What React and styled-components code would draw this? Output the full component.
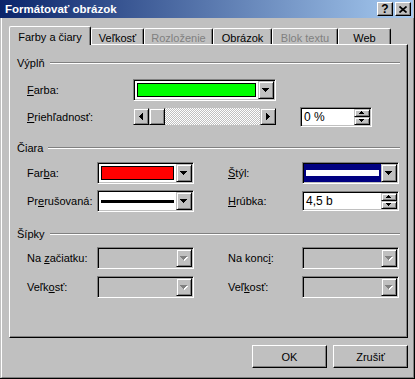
import React from "react";
import styled, { createGlobalStyle } from "styled-components";

const FACE = "#c0c0c0";
const SHADOW = "#808080";
const DARK = "#000";
const LIGHT = "#fff";

const GlobalStyle = createGlobalStyle`
  html, body { margin: 0; padding: 0; background: ${FACE}; }
  body {
    font-family: "Liberation Sans", Arial, sans-serif;
    font-size: 11px;
    color: #000;
  }
  * { box-sizing: border-box; }
`;

const Window = styled.div`
  width: 415px;
  height: 379px;
  background: ${FACE};
  display: flex;
  flex-direction: column;
  border-right: 1px solid ${DARK};
  border-bottom: 1px solid ${DARK};
  overflow: hidden;
`;

const TitleBar = styled.div`
  flex: none;
  height: 18px;
  margin-right: 1px;
  display: flex;
  align-items: center;
  padding: 0 2px 0 5px;
  background: linear-gradient(to right, #0a246a, #a6caf0);
`;

const TitleText = styled.div`
  flex: 1;
  color: #fff;
  font-weight: bold;
  font-size: 11.5px;
  white-space: nowrap;
`;

const CaptionButton = styled.div`
  width: 16px;
  height: 14px;
  margin-left: ${({ $gap }) => $gap || 0}px;
  background: ${FACE};
  border: 1px solid;
  border-color: ${LIGHT} ${DARK} ${DARK} ${LIGHT};
  box-shadow: inset -1px -1px ${SHADOW};
  display: flex;
  align-items: center;
  justify-content: center;
  font-weight: bold;
  font-size: 12px;
  line-height: 1;
`;

const Body = styled.div`
  flex: 1;
  display: flex;
  flex-direction: column;
  margin-left: 1px;
  border-left: 1px solid ${LIGHT};
  border-right: 1px solid ${SHADOW};
  border-bottom: 1px solid ${SHADOW};
  padding: 8px 5px 0 7px;
`;

const TabStrip = styled.div`
  height: 18px;
  display: flex;
  align-items: flex-end;
`;

const Tab = styled.div`
  width: ${({ $w }) => $w}px;
  height: ${({ $active }) => ($active ? 19 : 16)}px;
  margin-bottom: ${({ $active }) => ($active ? -1 : 0)}px;
  position: relative;
  z-index: ${({ $active }) => ($active ? 1 : 0)};
  background: ${FACE};
  border-top: 1px solid ${LIGHT};
  border-left: 1px solid ${LIGHT};
  border-right: 1px solid ${DARK};
  border-radius: 2px 2px 0 0;
  box-shadow: inset -1px 0 ${SHADOW};
  display: flex;
  align-items: center;
  justify-content: center;
  padding-top: ${({ $active }) => ($active ? 1 : 2)}px;
  white-space: nowrap;
  color: ${({ $disabled }) => ($disabled ? SHADOW : "#000")};
`;

const Panel = styled.div`
  height: 294px;
  border-top: 1px solid ${LIGHT};
  border-left: 1px solid ${LIGHT};
  border-right: 1px solid ${DARK};
  border-bottom: 1px solid ${DARK};
  box-shadow: inset -1px -1px ${SHADOW};
  padding: 11px 7px 0 7px;
  display: flex;
  flex-direction: column;
`;

const GroupHeader = styled.div`
  height: 13px;
  display: flex;
  align-items: center;
  margin-top: ${({ $mt }) => $mt || 0}px;
`;

const GroupLine = styled.div`
  flex: 1;
  height: 2px;
  margin-left: 5px;
  border-top: 1px solid ${SHADOW};
  border-bottom: 1px solid ${LIGHT};
`;

const FillRow = styled.div`
  display: grid;
  grid-template-columns: 106px 143px 24px 72px;
  align-items: ${({ $align }) => $align || "center"};
  margin: ${({ $mt }) => $mt}px 0 0 10px;
`;

const LineRow = styled.div`
  display: grid;
  grid-template-columns: 70px 97px 34px 74px 97px;
  align-items: center;
  margin: ${({ $mt }) => $mt}px 0 0 10px;
`;

const Label = styled.div`
  white-space: nowrap;
  grid-column: ${({ $col }) => $col || "auto"};
  align-self: center;
`;

const Combo = styled.div`
  height: 22px;
  grid-column: ${({ $col }) => $col || "auto"};
  display: flex;
  padding: 1px;
  border: 1px solid;
  border-color: ${SHADOW} ${LIGHT} ${LIGHT} ${SHADOW};
  box-shadow: inset 1px 1px ${DARK}, inset -1px -1px ${FACE};
  background: ${({ $disabled }) => ($disabled ? FACE : LIGHT)};
`;

const ComboField = styled.div`
  flex: 1;
  padding: 2px;
  display: flex;
  align-items: center;
  background: ${({ $bg }) => $bg || "transparent"};
`;

const Swatch = styled.div`
  width: 100%;
  height: 100%;
  border: 1px solid ${DARK};
  background: ${({ $color }) => $color};
`;

const LineSample = styled.div`
  width: 100%;
  height: ${({ $weight }) => $weight}px;
  background: ${({ $color }) => $color};
`;

const DropButton = styled.div`
  width: 16px;
  flex: none;
  background: ${FACE};
  border: 1px solid;
  border-color: ${FACE} ${DARK} ${DARK} ${FACE};
  box-shadow: inset 1px 1px ${LIGHT}, inset -1px -1px ${SHADOW};
  display: flex;
  align-items: center;
  justify-content: center;
`;

const Slider = styled.div`
  height: 17px;
  margin-top: 1px;
  display: flex;
`;

const RaisedBox = styled.div`
  width: 16px;
  flex: none;
  background: ${FACE};
  border: 1px solid;
  border-color: ${FACE} ${DARK} ${DARK} ${FACE};
  box-shadow: inset 1px 1px ${LIGHT}, inset -1px -1px ${SHADOW};
  display: flex;
  align-items: center;
  justify-content: center;
`;

const Track = styled.div`
  flex: 1;
  background-color: ${FACE};
  background-image: conic-gradient(${LIGHT} 25%, ${FACE} 0 50%, ${LIGHT} 0 75%, ${FACE} 0);
  background-size: 2px 2px;
`;

const Spin = styled.div`
  height: 20px;
  grid-column: ${({ $col }) => $col || "auto"};
  display: flex;
  padding: 1px;
  border: 1px solid;
  border-color: ${SHADOW} ${LIGHT} ${LIGHT} ${SHADOW};
  box-shadow: inset 1px 1px ${DARK}, inset -1px -1px ${FACE};
  background: ${LIGHT};
`;

const SpinText = styled.div`
  flex: 1;
  padding-left: 2px;
  display: flex;
  align-items: center;
  font-size: 12px;
`;

const SpinButtons = styled.div`
  width: 16px;
  display: flex;
  flex-direction: column;
`;

const SpinButton = styled.div`
  flex: 1;
  background: ${FACE};
  border: 1px solid;
  border-color: ${FACE} ${DARK} ${DARK} ${FACE};
  box-shadow: inset 1px 1px ${LIGHT}, inset -1px -1px ${SHADOW};
  display: flex;
  align-items: center;
  justify-content: center;
`;

const ButtonRow = styled.div`
  display: flex;
  justify-content: flex-end;
  gap: 6px;
  margin-top: 7px;
`;

const Button = styled.div`
  width: 75px;
  height: 23px;
  background: ${FACE};
  border: 1px solid;
  border-color: ${LIGHT} ${DARK} ${DARK} ${LIGHT};
  box-shadow: inset -1px -1px ${SHADOW};
  display: flex;
  align-items: center;
  justify-content: center;
`;

const Arrow = ({ dir = "down", disabled }) => {
  const shapes = {
    down: { w: 7, h: 4, d: "M0 0h7v1h-1v1h-1v1h-1v1h-1v-1h-1v-1h-1v-1h-1z" },
    up: { w: 5, h: 3, d: "M2 0h1v1h1v1h1v1h-5v-1h1v-1h1z" },
    smalldown: { w: 5, h: 3, d: "M0 0h5v1h-1v1h-1v1h-1v-1h-1v-1h-1z" },
    left: { w: 4, h: 7, d: "M3 0h1v7h-1v-1h-1v-1h-1v-1h-1v-1h1v-1h1v-1h1z" },
    right: { w: 4, h: 7, d: "M0 0h1v1h1v1h1v1h1v1h-1v1h-1v1h-1v1h-1z" },
  };
  const s = shapes[dir];
  return (
    <svg width={s.w + 1} height={s.h + 1} shapeRendering="crispEdges">
      {disabled && <path d={s.d} fill={LIGHT} transform="translate(1 1)" />}
      <path d={s.d} fill={disabled ? SHADOW : DARK} />
    </svg>
  );
};

const CloseGlyph = () => (
  <svg width="8" height="7" viewBox="0 0 8 7">
    <path d="M0.5 0.5L7.5 6.5M7.5 0.5L0.5 6.5" stroke="#000" strokeWidth="1.7" />
  </svg>
);

const DropDown = ({ col, disabled, children }) => (
  <Combo $col={col} $disabled={disabled}>
    {children || <ComboField />}
    <DropButton>
      <Arrow dir="down" disabled={disabled} />
    </DropButton>
  </Combo>
);

const SpinBox = ({ col, value }) => (
  <Spin $col={col}>
    <SpinText>{value}</SpinText>
    <SpinButtons>
      <SpinButton>
        <Arrow dir="up" />
      </SpinButton>
      <SpinButton>
        <Arrow dir="smalldown" />
      </SpinButton>
    </SpinButtons>
  </Spin>
);

const tabs = [
  { label: "Farby a čiary", w: 82, active: true },
  { label: "Veľkosť", w: 53 },
  { label: "Rozloženie", w: 69, disabled: true },
  { label: "Obrázok", w: 59 },
  { label: "Blok textu", w: 66, disabled: true },
  { label: "Web", w: 53 },
];

export default function App() {
  return (
    <>
      <GlobalStyle />
      <Window>
        <TitleBar>
          <TitleText>Formátovať obrázok</TitleText>
          <CaptionButton>?</CaptionButton>
          <CaptionButton $gap={2}>
            <CloseGlyph />
          </CaptionButton>
        </TitleBar>
        <Body>
          <TabStrip>
            {tabs.map((t) => (
              <Tab key={t.label} $w={t.w} $active={t.active} $disabled={t.disabled}>
                {t.label}
              </Tab>
            ))}
          </TabStrip>
          <Panel>
            <GroupHeader>
              Výplň
              <GroupLine />
            </GroupHeader>
            <FillRow $mt={10}>
              <Label>
                <u>F</u>arba:
              </Label>
              <DropDown>
                <ComboField>
                  <Swatch $color="#00ff00" />
                </ComboField>
              </DropDown>
            </FillRow>
            <FillRow $mt={6} $align="start">
              <Label>
                <u>P</u>riehľadnosť:
              </Label>
              <Slider>
                <RaisedBox>
                  <Arrow dir="left" />
                </RaisedBox>
                <RaisedBox />
                <Track />
                <RaisedBox>
                  <Arrow dir="right" />
                </RaisedBox>
              </Slider>
              <span />
              <SpinBox value="0 %" />
            </FillRow>

            <GroupHeader $mt={14}>
              Čiara
              <GroupLine />
            </GroupHeader>
            <LineRow $mt={8}>
              <Label>
                Far<u>b</u>a:
              </Label>
              <DropDown>
                <ComboField>
                  <Swatch $color="#ff0000" />
                </ComboField>
              </DropDown>
              <Label $col={4}>
                <u>Š</u>týl:
              </Label>
              <DropDown>
                <ComboField $bg="#000080">
                  <LineSample $weight={6} $color={LIGHT} />
                </ComboField>
              </DropDown>
            </LineRow>
            <LineRow $mt={6}>
              <Label>
                Pr<u>e</u>rušovaná:
              </Label>
              <DropDown>
                <ComboField>
                  <LineSample $weight={3} $color={DARK} />
                </ComboField>
              </DropDown>
              <Label $col={4}>
                <u>H</u>rúbka:
              </Label>
              <SpinBox value="4,5 b" />
            </LineRow>

            <GroupHeader $mt={15}>
              Šípky
              <GroupLine />
            </GroupHeader>
            <LineRow $mt={7}>
              <Label>
                Na <u>z</u>ačiatku:
              </Label>
              <DropDown disabled />
              <Label $col={4}>
                Na konc<u>i</u>:
              </Label>
              <DropDown disabled />
            </LineRow>
            <LineRow $mt={7}>
              <Label>
                Veľk<u>o</u>sť:
              </Label>
              <DropDown disabled />
              <Label $col={4}>
                Veľ<u>k</u>osť:
              </Label>
              <DropDown disabled />
            </LineRow>
          </Panel>
          <ButtonRow>
            <Button>OK</Button>
            <Button>Zrušiť</Button>
          </ButtonRow>
        </Body>
      </Window>
    </>
  );
}
